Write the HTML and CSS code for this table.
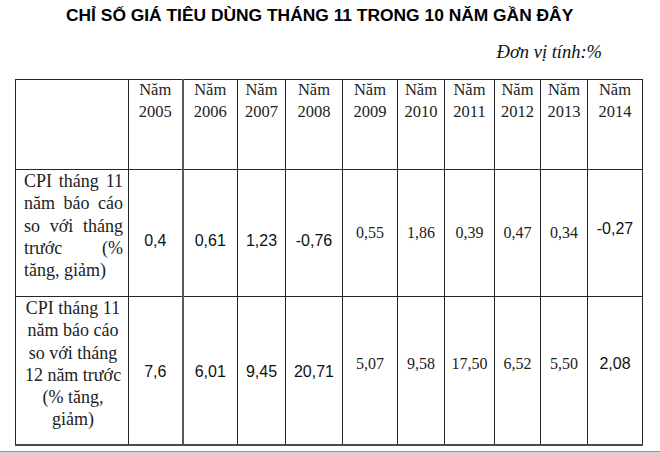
FILE: index.html
```html
<!DOCTYPE html>
<html lang="vi">
<head>
<meta charset="utf-8">
<link rel="stylesheet" href="styles.css">
</head>
<body>
<div class="page">
  <h1 class="title">CHỈ SỐ GIÁ TIÊU DÙNG THÁNG 11 TRONG 10 NĂM GẦN ĐÂY</h1>
  <div class="unit">Đơn vị tính:%</div>
  <table class="cpi">
    <colgroup>
      <col class="c-label">
      <col class="c-2005"><col class="c-2006"><col class="c-2007"><col class="c-2008">
      <col class="c-2009"><col class="c-2010"><col class="c-2011"><col class="c-2012">
      <col class="c-2013"><col class="c-2014">
    </colgroup>
    <tr class="head">
      <td class="label"></td>
      <td><div class="yr">Năm<br>2005</div></td>
      <td class="thick"><div class="yr">Năm<br>2006</div></td>
      <td><div class="yr">Năm<br>2007</div></td>
      <td><div class="yr">Năm<br>2008</div></td>
      <td><div class="yr">Năm<br>2009</div></td>
      <td><div class="yr">Năm<br>2010</div></td>
      <td><div class="yr">Năm<br>2011</div></td>
      <td><div class="yr">Năm<br>2012</div></td>
      <td><div class="yr">Năm<br>2013</div></td>
      <td><div class="yr">Năm<br>2014</div></td>
    </tr>
    <tr class="r1">
      <td class="label just">CPI tháng 11 năm báo cáo so với tháng trước (% tăng, giảm)</td>
      <td class="v sans down">0,4</td>
      <td class="v sans down thick">0,61</td>
      <td class="v sans down">1,23</td>
      <td class="v sans down">-0,76</td>
      <td class="v serif">0,55</td>
      <td class="v serif">1,86</td>
      <td class="v serif">0,39</td>
      <td class="v serif">0,47</td>
      <td class="v serif">0,34</td>
      <td class="v sans up">-0,27</td>
    </tr>
    <tr class="r2">
      <td class="label center">CPI tháng 11 năm báo cáo so với tháng 12 năm trước (% tăng, giảm)</td>
      <td class="v sans down2">7,6</td>
      <td class="v sans down2 thick">6,01</td>
      <td class="v sans down2">9,45</td>
      <td class="v sans down2">20,71</td>
      <td class="v serif up2">5,07</td>
      <td class="v serif up2">9,58</td>
      <td class="v serif up2">17,50</td>
      <td class="v serif up2">6,52</td>
      <td class="v serif up2">5,50</td>
      <td class="v sans up2">2,08</td>
    </tr>
  </table>
  <div class="rule"></div>
</div>
</body>
</html>
```

FILE: styles.css
```css
html, body {
  margin: 0;
  padding: 0;
  background: #ffffff;
}

.page {
  width: 660px;
  height: 453px;
  overflow: hidden;
  color: #111;
  font-family: "Liberation Serif", "Times New Roman", serif;
}

.title {
  margin: 5px 0 0 66px;
  font-family: "Liberation Sans", Arial, sans-serif;
  font-weight: bold;
  font-size: 17.4px;
  line-height: 20px;
  color: #000;
  white-space: nowrap;
}

.unit {
  margin: 17px 58px 0 0;
  text-align: right;
  font-style: italic;
  font-size: 18.5px;
  line-height: 21px;
}

.cpi {
  margin: 16px 0 0 15px;
  border-collapse: collapse;
  table-layout: fixed;
  width: 627px;
}

.cpi td {
  border: 1px solid #262626;
  padding: 0;
  text-align: center;
  vertical-align: middle;
}

.c-label { width: 113px; }
.c-2005 { width: 54px; }
.c-2006 { width: 55px; }
.c-2007 { width: 48px; }
.c-2008 { width: 57px; }
.c-2009 { width: 55px; }
.c-2010 { width: 47px; }
.c-2011 { width: 50px; }
.c-2012 { width: 46px; }
.c-2013 { width: 47px; }
.c-2014 { width: 55px; }

.cpi td.thick {
  border-left: 2px solid #5a5a5a;
}

.cpi .r2 td {
  border-bottom: 2px solid #4a4a4a;
}

.head { height: 90px; }
.r1 { height: 127px; }
.r2 { height: 148px; }

.head td {
  vertical-align: top;
}

.yr {
  font-size: 16.5px;
  line-height: 22px;
  margin-top: -1px;
  color: #222;
}

.label {
  vertical-align: top !important;
  padding: 0 5px 0 8px !important;
  font-size: 18px;
  line-height: 22.3px;
  color: #222;
}

.label.just {
  text-align: justify;
  text-align-last: left;
}

.label.center {
  text-align: center;
  padding: 0 4px 0 6px !important;
}

.v { font-size: 16px; }

.sans {
  font-family: "Liberation Sans", Arial, sans-serif;
  color: #111;
}

.serif {
  font-family: "Liberation Serif", "Times New Roman", serif;
  color: #222;
}

.cpi td.down { padding-top: 16px; }
.cpi td.up { padding-bottom: 8px; }
.cpi td.down2 { padding-top: 3px; }
.cpi td.up2 { padding-bottom: 12px; }

.rule {
  margin-top: 5px;
  height: 1px;
  background: #7d99c4;
  border-bottom: 1px solid #c9d6ea;
}
```
